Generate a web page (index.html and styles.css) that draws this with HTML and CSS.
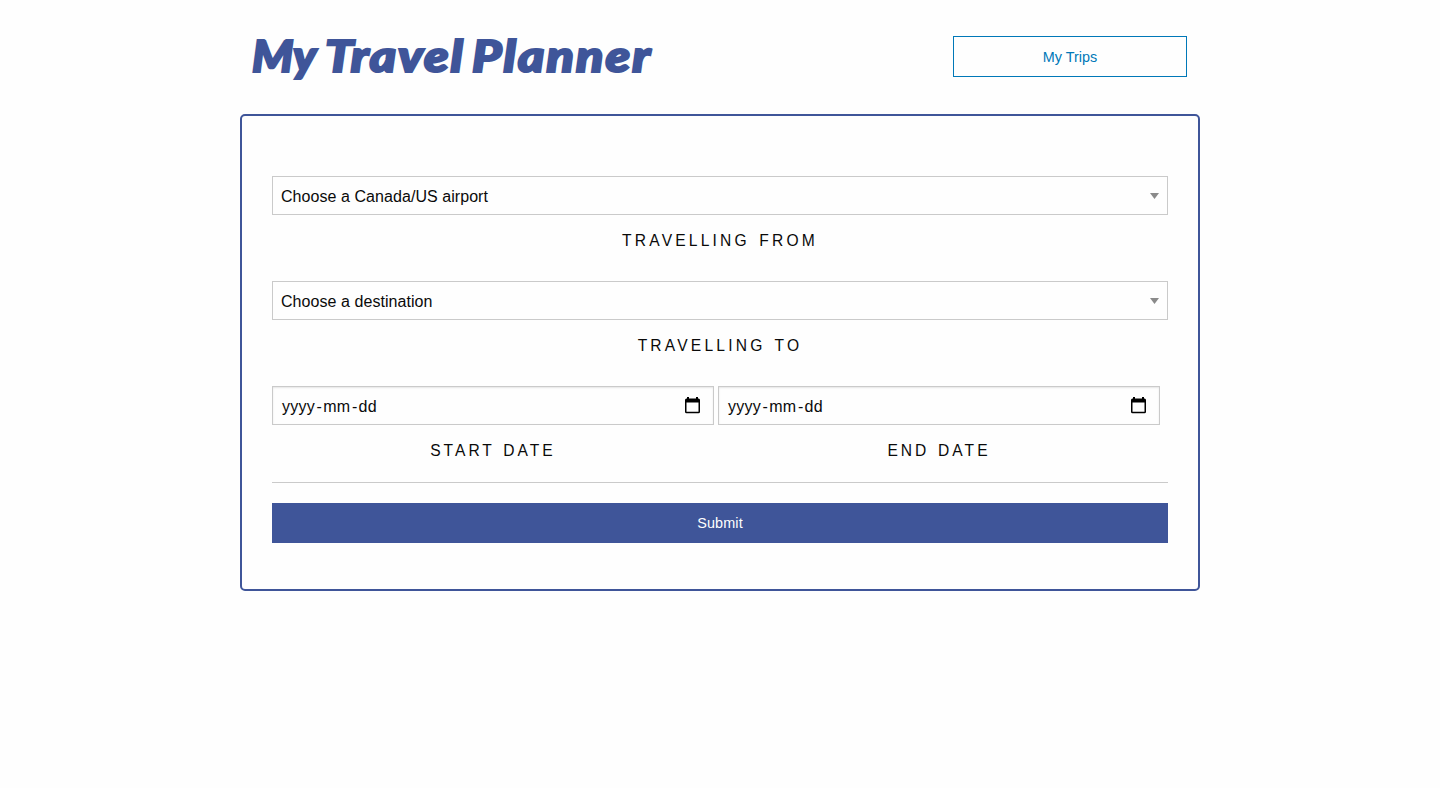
FILE: index.html
```html
<!DOCTYPE html>
<html lang="en">
<head>
<meta charset="utf-8">
<title>My Travel Planner</title>
<link rel="stylesheet" href="styles.css">
</head>
<body>
<header class="header">
  <h1 class="title"><span class="my">My</span> <span class="travel">Travel</span> <span class="plan">Planner</span></h1>
  <button class="trips" type="button">My Trips</button>
</header>
<main class="planner">
  <div class="group">
    <div class="field"><span class="choice">Choose a Canada/US airport</span><svg class="arrow" viewBox="0 0 9 6"><path d="M0 0h9L4.5 6z"/></svg></div>
    <div class="label">TRAVELLING FROM</div>
  </div>
  <div class="group">
    <div class="field"><span class="choice">Choose a destination</span><svg class="arrow" viewBox="0 0 9 6"><path d="M0 0h9L4.5 6z"/></svg></div>
    <div class="label">TRAVELLING TO</div>
  </div>
  <div class="dates">
    <div class="date">
      <div class="field date-field"><span class="hint">yyyy<span class="dash">-</span>mm<span class="dash">-</span>dd</span><svg class="calendar" viewBox="0 0 15 17"><path fill-rule="evenodd" d="M2 0h2v1.500h7V0h2v1.500H13.500A1.500 1.500 0 0 1 15 3v11.700a1.500 1.500 0 0 1-1.500 1.500h-12A1.500 1.500 0 0 1 0 14.700V3A1.500 1.500 0 0 1 1.500 1.500H2zM1.500 5.500v9.200h12V5.500z"/></svg></div>
      <div class="label label-date">START DATE</div>
    </div>
    <div class="date">
      <div class="field date-field"><span class="hint">yyyy<span class="dash">-</span>mm<span class="dash">-</span>dd</span><svg class="calendar" viewBox="0 0 15 17"><path fill-rule="evenodd" d="M2 0h2v1.500h7V0h2v1.500H13.500A1.500 1.500 0 0 1 15 3v11.700a1.500 1.500 0 0 1-1.500 1.500h-12A1.500 1.500 0 0 1 0 14.700V3A1.500 1.500 0 0 1 1.500 1.500H2zM1.500 5.500v9.200h12V5.500z"/></svg></div>
      <div class="label label-date">END DATE</div>
    </div>
  </div>
  <button class="submit" type="button">Submit</button>
</main>
</body>
</html>
```
FILE: styles.css
```css
* { box-sizing: border-box; }
body { margin: 0; background: #fefefe; color: #0a0a0a; font: 16px "Liberation Sans", Arial, sans-serif; }
.header { width: 960px; height: 114px; margin: 0 auto; padding: 0 13px 0 12px; display: flex; justify-content: space-between; }
.title { display: flex; margin: 25px 0 0; color: #3f5599; font: italic 900 44px/60px Lato, sans-serif; white-space: nowrap; -webkit-text-stroke: 2.2px #3f5599; paint-order: stroke fill; transform: scaleX(1.14); transform-origin: left center; }
.my { width: 64px; transform: scaleX(.93); transform-origin: left center; }
.travel { width: 129px; letter-spacing: 1.6px; }
.plan { letter-spacing: 1.9px; }
.trips { width: 234px; height: 41px; margin-top: 36px; border: 1px solid #0078b8; background: transparent; color: #0078b8; font: 14.4px "Liberation Sans", Arial, sans-serif; }
.planner { width: 960px; height: 477px; margin: 0 auto; padding: 60px 30px 0; border: 2px solid #3f5599; border-radius: 5px; }
.group { height: 105px; }
.field { height: 39px; border: 1px solid #cacaca; padding: 0 8px; display: flex; align-items: center; justify-content: space-between; line-height: 24px; }
.choice { padding-top: 2px; letter-spacing: .06px; }
.arrow { width: 9px; height: 6px; fill: #8a8a8a; }
.label { height: 24px; margin-top: 14px; text-align: center; font-size: 15.6px; line-height: 24px; letter-spacing: 3.2px; word-spacing: 1.8px; white-space: nowrap; }
.label-date { letter-spacing: 3px; word-spacing: 1.4px; }
.dates { height: 97px; display: flex; gap: 4px; border-bottom: 1px solid #cacaca; }
.date { width: 442px; }
.date-field { padding: 0 13px 0 9px; box-shadow: inset 0 1px 2px rgba(10, 10, 10, .1); }
.hint { padding-top: 2px; letter-spacing: .25px; }
.dash { margin: 0 1px 0 1.6px; }
.calendar { width: 15px; height: 17px; }
.submit { display: block; width: 100%; height: 40px; margin-top: 20px; border: 0; background: #3f5599; color: #fefefe; font: 14.4px "Liberation Sans", Arial, sans-serif; letter-spacing: .15px; }
```
